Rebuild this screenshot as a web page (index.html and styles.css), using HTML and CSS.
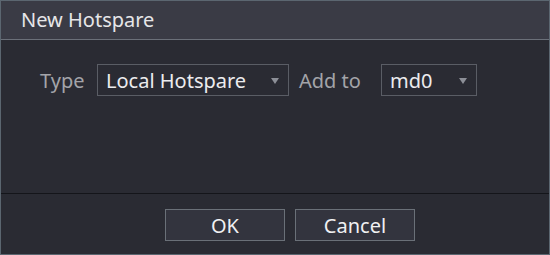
FILE: index.html
```html
<!DOCTYPE html>
<html>
<head>
<meta charset="utf-8">
<link rel="stylesheet" href="styles.css">
</head>
<body>
<div class="dialog">
  <div class="titlebar">New Hotspare</div>
  <div class="content">
    <div class="field">
      <span class="label lbl-type">Type</span>
      <div class="select sel-type"><span>Local Hotspare</span><i class="arrow"></i></div>
    </div>
    <div class="field">
      <span class="label lbl-add">Add to</span>
      <div class="select sel-md"><span>md0</span><i class="arrow"></i></div>
    </div>
  </div>
  <div class="footer">
    <button class="btn">OK</button>
    <button class="btn">Cancel</button>
  </div>
</div>
</body>
</html>
```
FILE: styles.css
```css
html, body {
  margin: 0;
  padding: 0;
  background: #2a2b33;
}
body {
  width: 550px;
  height: 255px;
  overflow: hidden;
  font-family: "Noto Sans", "Open Sans", sans-serif;
}
.dialog {
  box-sizing: border-box;
  width: 550px;
  height: 255px;
  border: 1px solid #5b6670;
  background: #2a2b33;
  display: flex;
  flex-direction: column;
}
.titlebar {
  height: 38px;
  background: #3a3b45;
  border-bottom: 1px solid #6b7079;
  color: #e6e6e8;
  font-size: 20px;
  line-height: 37px;
  padding-left: 20px;
}
.content {
  height: 154px;
  border-bottom: 1px solid #14151a;
  display: flex;
  align-items: flex-start;
  padding: 24px 0 0 39px;
  box-sizing: border-box;
  gap: 10px;
}
.field {
  display: flex;
  align-items: center;
}
.label {
  color: #a3a4a9;
  font-size: 20px;
}
.lbl-type { width: 57px; }
.lbl-add { width: 82px; }
.select {
  box-sizing: border-box;
  height: 32px;
  border: 1px solid #5a5d65;
  display: flex;
  align-items: center;
  justify-content: space-between;
  padding: 0 9px 0 8px;
  color: #ececee;
  font-size: 20px;
}
.sel-type { width: 192px; }
.sel-md { width: 96px; }
.arrow {
  width: 0;
  height: 0;
  margin-top: 1px;
  border-left: 4px solid transparent;
  border-right: 4px solid transparent;
  border-top: 6px solid #8c8f97;
}
.footer {
  flex: 1;
  display: flex;
  justify-content: flex-start;
  align-items: flex-start;
  padding: 15px 0 0 164px;
  gap: 10px;
}
.btn {
  box-sizing: border-box;
  width: 120px;
  height: 32px;
  background: #33343e;
  border: 1px solid #6a7078;
  color: #f0f0f2;
  font-family: "Noto Sans", "Open Sans", sans-serif;
  font-size: 20px;
  padding: 0;
  margin: 0;
}
```
